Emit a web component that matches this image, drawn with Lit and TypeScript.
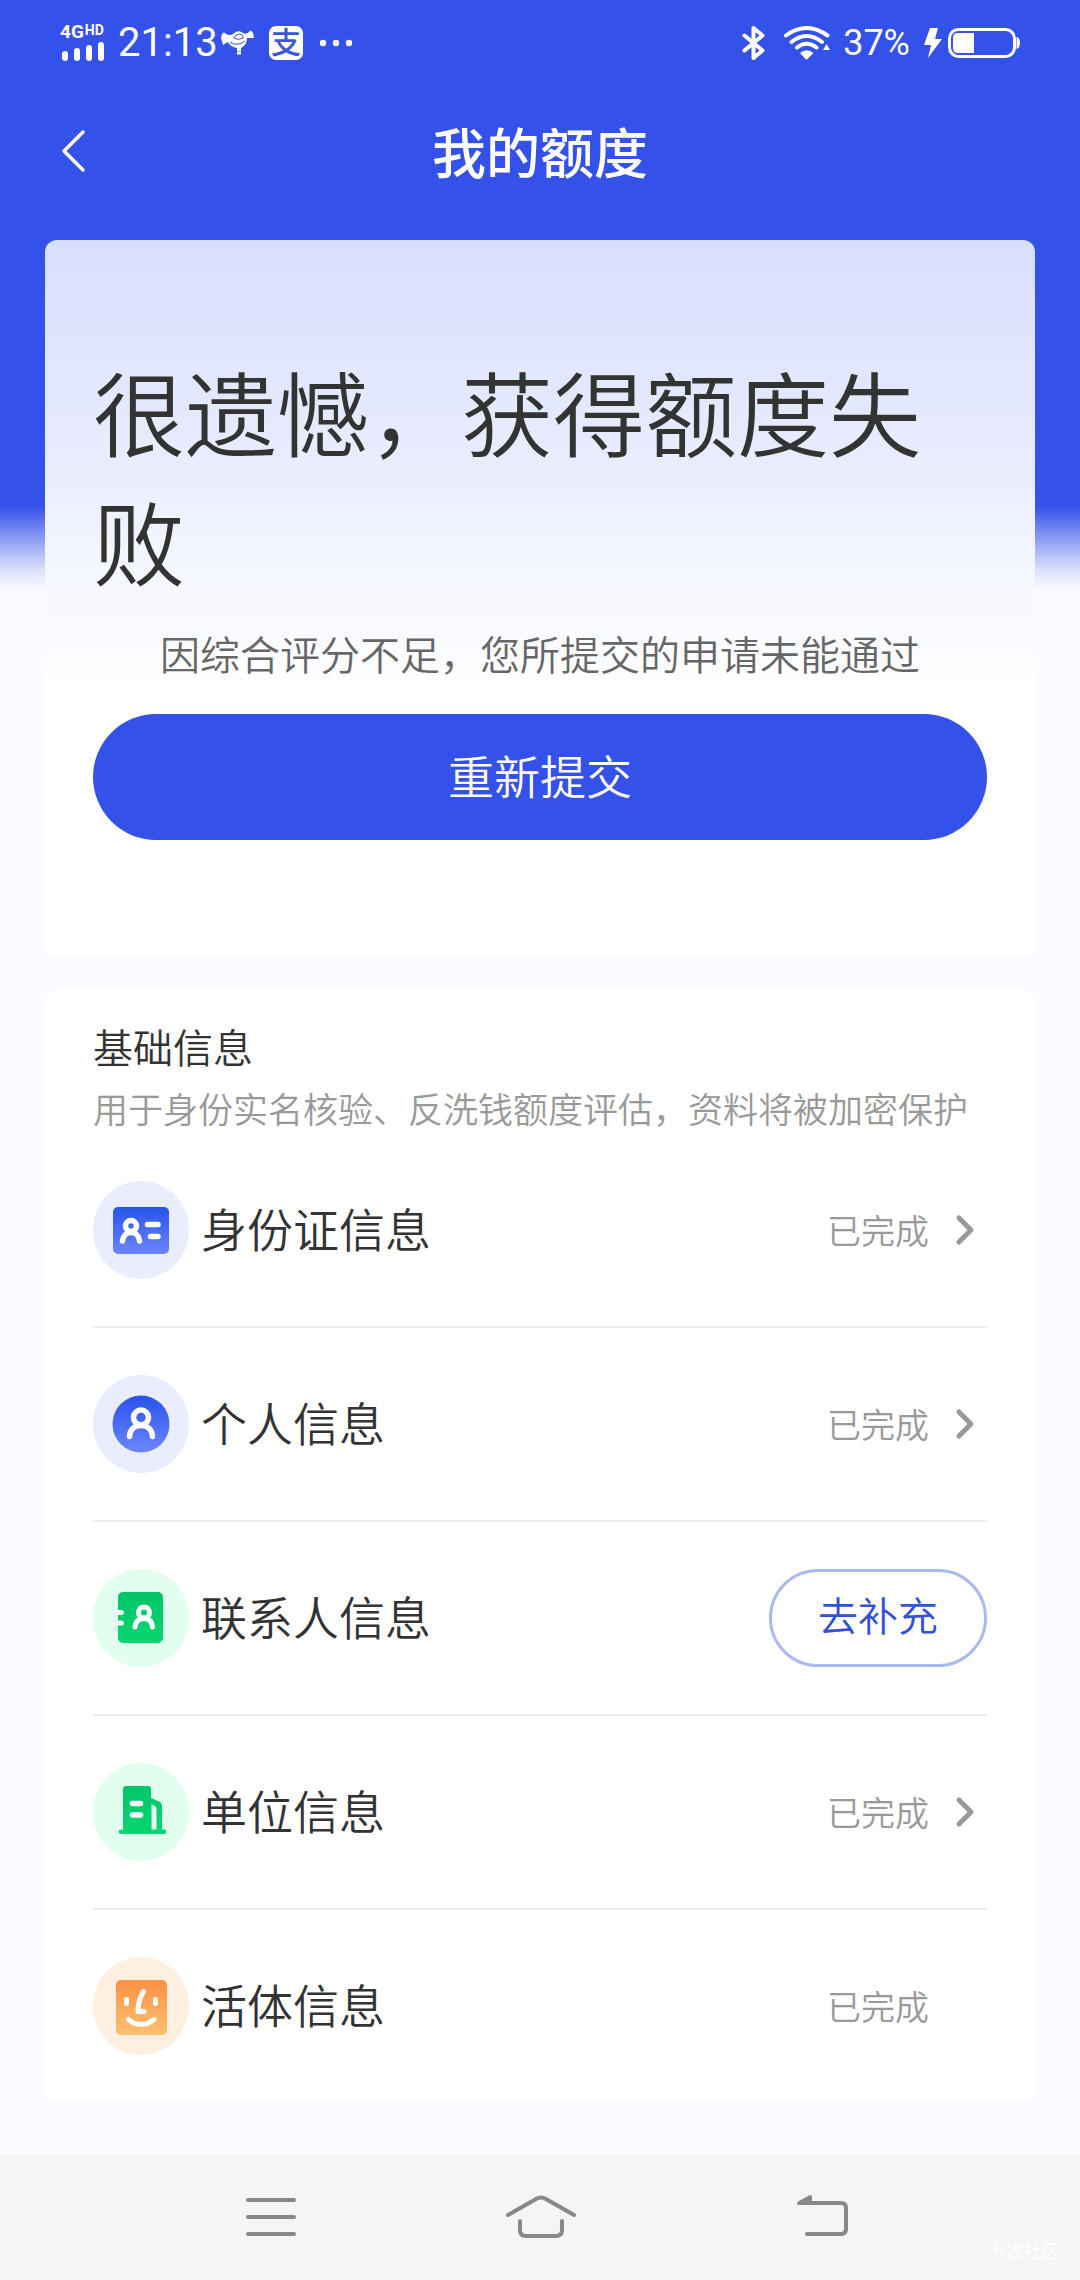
import { LitElement, html, svg, css, nothing } from "lit";
import { customElement, property } from "lit/decorators.js";

type IconName = "idcard" | "person" | "contacts" | "company" | "face";

interface InfoItem {
  icon: IconName;
  label: string;
  status: "done" | "todo";
  link: boolean;
}

const ITEMS: InfoItem[] = [
  { icon: "idcard", label: "身份证信息", status: "done", link: true },
  { icon: "person", label: "个人信息", status: "done", link: true },
  { icon: "contacts", label: "联系人信息", status: "todo", link: false },
  { icon: "company", label: "单位信息", status: "done", link: true },
  { icon: "face", label: "活体信息", status: "done", link: false },
];

const ICONS = {
  idcard: svg`
    <ellipse cx="48" cy="49" rx="48" ry="49" fill="#eaedfe"/>
    <rect x="20" y="26" width="56" height="47" rx="5" fill="url(#blue)"/>
    <g fill="none" stroke="#fff" stroke-width="5.5" stroke-linecap="round">
      <circle cx="38" cy="45" r="5.5"/>
      <path d="M29.5 60C30 54.5 33.5 51.5 38 51.5S46 54.5 46.5 60"/>
      <path d="M54.5 43.5H65M57.5 55.5H65"/>
    </g>`,
  person: svg`
    <ellipse cx="48" cy="49" rx="48" ry="49" fill="#eaedfe"/>
    <circle cx="48" cy="49" r="28.5" fill="url(#blue)"/>
    <g fill="none" stroke="#fff" stroke-width="5.5" stroke-linecap="round">
      <circle cx="48" cy="42.5" r="7.5"/>
      <path d="M36.5 61.5C37 54.5 41.5 50.5 48 50.5S59 54.5 59.5 61.5"/>
    </g>`,
  contacts: svg`
    <ellipse cx="48" cy="49" rx="48" ry="49" fill="#e2feef"/>
    <rect x="25" y="23" width="45" height="51" rx="5" fill="url(#green)"/>
    <g fill="none" stroke="#effff6" stroke-width="5" stroke-linecap="round">
      <path d="M24 43.5H28.5M24 54H28.5"/>
      <circle cx="51" cy="43.5" r="5.5" stroke="#fff"/>
      <path stroke="#fff" d="M42 58C42.5 52.5 46 49.5 51 49.5S59 52.5 59.5 58"/>
    </g>`,
  company: svg`
    <ellipse cx="48" cy="49" rx="48" ry="49" fill="#e2feef"/>
    <path fill="url(#green)" d="M30 67V26Q30 23 33 23H55Q58 23 58 26V35L66 38.5Q69 40 69 43V66.5H71A2.25 2.25 0 0 1 71 71H28A2.25 2.25 0 0 1 28 66.5Z"/>
    <path fill="#e2feef" d="M58.5 41L62 43Q63.5 44 63.5 46V66.5H58.5Z"/>
    <path fill="none" stroke="#fff" stroke-width="5.5" stroke-linecap="round" d="M39.5 40.5H47.5M39.5 52H47.5"/>`,
  face: svg`
    <ellipse cx="48" cy="49" rx="48" ry="49" fill="#feefe0"/>
    <rect x="23" y="23" width="51" height="55" rx="5" fill="url(#orange)"/>
    <g fill="none" stroke="#fff" stroke-width="5" stroke-linecap="round" stroke-linejoin="round">
      <path d="M33.5 42.5V46.5M62.5 42.5V46.5"/>
      <path d="M50.5 34.5C47 40 45 47 45 54.5H51"/>
      <path d="M35.5 62.5C42.5 69 54 69 61 62.5"/>
    </g>`,
};

@customElement("info-icon")
class InfoIcon extends LitElement {
  @property() name: IconName = "idcard";

  static styles = css`
    :host { display: block; flex: none; }
    .icon { display: block; width: 96px; height: 98px; }
  `;

  render() {
    return html`
      <svg class="icon" viewBox="0 0 96 98" aria-hidden="true">
        <defs>
          <linearGradient id="blue" x1="0" y1="0" x2="0" y2="1">
            <stop offset="0" stop-color="#2853ea"/><stop offset="1" stop-color="#6c86ff"/>
          </linearGradient>
          <linearGradient id="green" x1="0" y1="0" x2="0" y2="1">
            <stop offset="0" stop-color="#02c569"/><stop offset="1" stop-color="#06d672"/>
          </linearGradient>
          <linearGradient id="orange" x1="0" y1="0" x2="0" y2="1">
            <stop offset="0" stop-color="#ff9144"/><stop offset="1" stop-color="#fdc070"/>
          </linearGradient>
        </defs>
        ${ICONS[this.name]}
      </svg>`;
  }
}

@customElement("status-bar")
class StatusBar extends LitElement {
  static styles = css`
    :host {
      display: flex;
      justify-content: space-between;
      align-items: center;
      height: 86px;
      padding: 0 60px;
      color: #fff;
      font-family: Roboto, "Noto Sans CJK SC", sans-serif;
      font-weight: 400;
    }
    .side { display: flex; align-items: center; }
    .signal { display: flex; flex-direction: column; gap: 1px; width: 48px; margin-right: 10px; }
    .network { display: flex; align-items: flex-start; gap: 1px; font-weight: 700; }
    .gen { font-size: 19px; line-height: 16px; }
    .hd { font-size: 14px; line-height: 12px; }
    .time { font-size: 40px; line-height: 48px; }
    .percent { font-size: 36px; line-height: 48px; }
    svg { display: block; flex: none; }
    .bird { margin-left: 3px; }
    .pay { margin-left: 14px; }
    .dots { margin-left: 16px; }
    .wifi { margin: 0 13px 0 18px; }
    .bolt { margin: 0 6px 0 14px; }
  `;

  render() {
    return html`
      <div class="side">
        <div class="signal">
          <div class="network"><span class="gen">4G</span><span class="hd">HD</span></div>
          <svg width="46" height="22" viewBox="0 0 46 22" stroke="#fff" stroke-width="6" stroke-linecap="round">
            <path d="M5 13V17M17 10V17M29 7V17M41 4V17"/>
          </svg>
        </div>
        <span class="time">21:13</span>
        <svg class="bird" width="34" height="28" viewBox="0 0 34 28">
          <path fill="#fff" d="M1 5Q3 2 5 5Q9 7 12 5Q17 0 22 4Q25 6 28 3Q30 0 32 4L33 9Q29 9 26 9Q26 16 20 19V22H16V19Q9 18 7 13L2 16L1 12L0 9Z"/>
          <path fill="none" stroke="#3451e9" stroke-width="1" d="M13 9Q14 5 19 5Q23 6 22 9Q17 12 13 9ZM9 13Q16 18 24 12"/>
          <path stroke="#fff" stroke-width="3" d="M16 24H20"/>
        </svg>
        <svg class="pay" width="34" height="34" viewBox="0 0 34 34">
          <rect width="34" height="34" rx="7" fill="#fff"/>
          <text x="17" y="27" text-anchor="middle" font-size="30" font-weight="500" fill="#3e58d4">支</text>
        </svg>
        <svg class="dots" width="34" height="8" viewBox="0 0 34 8" fill="#fff">
          <circle cx="4" cy="4" r="3.2"/><circle cx="17" cy="4" r="3.2"/><circle cx="30" cy="4" r="3.2"/>
        </svg>
      </div>
      <div class="side">
        <svg width="24" height="36" viewBox="0 0 24 36" fill="none" stroke="#fff" stroke-width="4" stroke-linecap="round" stroke-linejoin="round">
          <path d="M2.5 10.5L20.5 25.5L11.5 33V3L20.5 10.5L2.5 25.5"/>
        </svg>
        <svg class="wifi" width="46" height="34" viewBox="0 0 46 34" fill="none" stroke="#fff" stroke-width="4" stroke-linecap="round">
          <path d="M2 9.5Q22.5 -5.5 43.5 9.5M7.5 16Q22.5 4 38 16M13 21.5Q22.5 14 32.5 21.5"/>
          <path fill="#fff" stroke="none" d="M16 27Q22.5 21.5 29.5 27L23.5 33Q22.5 34 21.5 33ZM39 24L42.5 18L46 24Z"/>
        </svg>
        <span class="percent">37%</span>
        <svg class="bolt" width="18" height="30" viewBox="0 0 18 30"><path fill="#fff" d="M6 0H14L11 11H18L4 30L7 17H0Z"/></svg>
        <svg width="72" height="30" viewBox="0 0 72 30">
          <rect x="1.5" y="1.5" width="65" height="27" rx="9" fill="none" stroke="#fff" stroke-width="3"/>
          <path fill="#fff" d="M10 5H26V25H10Q5 25 5 20V10Q5 5 10 5ZM68.5 9Q72 10 72 15T68.5 21Z"/>
        </svg>
      </div>`;
  }
}

@customElement("app-root")
class AppRoot extends LitElement {
  static styles = css`
    :host {
      display: flex;
      flex-direction: column;
      min-height: 100vh;
      color: #333;
      background: #fafbff linear-gradient(#3451e9 506px, #8e9ff2 540px, #dce2fc 570px, #fafbff 592px) no-repeat;
      font-family: "Noto Sans CJK SC", sans-serif;
      font-weight: 350;
    }
    h1, h2, h3, p, ul { margin: 0; padding: 0; font-weight: inherit; }
    button { margin: 0; padding: 0; font: inherit; cursor: pointer; }
    svg { display: block; flex: none; }
    .titlebar {
      display: grid;
      grid-template-columns: 96px 1fr 96px;
      align-items: center;
      height: 130px;
    }
    .back {
      justify-self: end;
      border: 0;
      background: none;
    }
    .title {
      color: #fff;
      font-size: 54px;
      font-weight: 500;
      line-height: 72px;
      text-align: center;
    }
    .content {
      display: flex;
      flex-direction: column;
      gap: 32px;
      padding: 24px 45px 48px;
    }
    .card { padding: 0 48px; border-radius: 12px; background: #fff; }
    .result {
      padding-top: 105px;
      padding-bottom: 118px;
      background: linear-gradient(#d8dffe, #dee3fe 80px, #eaedfe 230px, #f5f7ff 330px, #fafbff 400px, #fff 450px);
    }
    .headline { font-size: 92px; line-height: 129px; }
    .reason {
      margin-top: 22px;
      color: #666;
      font-size: 40px;
      line-height: 56px;
      text-align: center;
    }
    .submit {
      display: block;
      width: 100%;
      height: 126px;
      margin-top: 33px;
      padding-bottom: 6px;
      border: 0;
      border-radius: 63px;
      background: #3451e9;
      color: #fff;
      font-size: 46px;
    }
    .info { padding-top: 28px; }
    .section { font-size: 40px; line-height: 56px; }
    .note { margin-top: 10px; padding-bottom: 2px; color: #999; font-size: 35px; line-height: 48px; }
    .list { list-style: none; }
    .item + .item { border-top: 2px solid #ececec; }
    .row {
      display: flex;
      align-items: center;
      gap: 12px;
      height: 192px;
      color: inherit;
      text-decoration: none;
    }
    .label { flex: 1; padding-bottom: 6px; font-size: 46px; line-height: 64px; }
    .status { color: #999; font-size: 34px; line-height: 48px; }
    .arrow { width: 46px; height: 36px; }
    .fill {
      height: 98px;
      padding: 0 46px 8px;
      border: 3px solid #aab8f3;
      border-radius: 49px;
      background: none;
      color: #3350d6;
      font-size: 40px;
    }
    .nav {
      position: relative;
      display: grid;
      grid-template-columns: repeat(3, 1fr);
      height: 126px;
      margin-top: auto;
      padding: 0 119px 0 133px;
      background: #f5f5f5;
    }
    .key {
      display: flex;
      align-items: center;
      justify-content: center;
      border: 0;
      background: none;
    }
    .mark {
      position: absolute;
      right: 20px;
      bottom: 18px;
      color: #fff;
      font-size: 18px;
      line-height: 24px;
    }
  `;

  private renderRow(item: InfoItem) {
    const body = html`
      <info-icon name=${item.icon}></info-icon>
      <span class="label">${item.label}</span>
      ${item.status === "done"
        ? html`<span class="status">已完成</span>
            <svg class="arrow" viewBox="0 0 46 36" fill="none" stroke="#999" stroke-width="5" stroke-linecap="round" stroke-linejoin="round">
              ${item.link ? svg`<path d="M18 6L30 18L18 30"/>` : nothing}
            </svg>`
        : html`<button class="fill" type="button">去补充</button>`}`;
    return html`<li class="item">
      ${item.link
        ? html`<a class="row" href=${"#" + item.icon}>${body}</a>`
        : html`<div class="row">${body}</div>`}
    </li>`;
  }

  render() {
    return html`
      <status-bar></status-bar>
      <header class="titlebar">
        <button class="back" type="button" aria-label="返回">
          <svg width="36" height="48" viewBox="0 0 36 48" fill="none" stroke="#fff" stroke-width="3.5" stroke-linecap="round" stroke-linejoin="round">
            <path d="M23 5L4 24L23 43"/>
          </svg>
        </button>
        <h1 class="title">我的额度</h1>
      </header>
      <main class="content">
        <section class="card result">
          <h2 class="headline">很遗憾，获得额度失败</h2>
          <p class="reason">因综合评分不足，您所提交的申请未能通过</p>
          <button class="submit" type="button">重新提交</button>
        </section>
        <section class="card info">
          <h3 class="section">基础信息</h3>
          <p class="note">用于身份实名核验、反洗钱额度评估，资料将被加密保护</p>
          <ul class="list">${ITEMS.map((item) => this.renderRow(item))}</ul>
        </section>
      </main>
      <nav class="nav">
        <button class="key" type="button" aria-label="菜单">
          <svg width="50" height="44" viewBox="0 0 50 44" stroke="#888" stroke-width="4" stroke-linecap="round">
            <path d="M2 5H48M2 22H48M2 39H48"/>
          </svg>
        </button>
        <button class="key" type="button" aria-label="主页">
          <svg width="82" height="44" viewBox="0 0 82 44" fill="none" stroke="#888" stroke-width="4" stroke-linecap="round" stroke-linejoin="round">
            <path d="M2 20L30 4Q35 1 40 4L68 20M14 26V35Q14 41 20 41H50Q56 41 56 35V26"/>
          </svg>
        </button>
        <button class="key" type="button" aria-label="返回上一页">
          <svg width="52" height="44" viewBox="0 0 52 44" fill="none" stroke="#888" stroke-width="4" stroke-linecap="round">
            <path d="M8 8H44Q49 8 49 13V34Q49 39 44 39H10"/>
            <path fill="#888" stroke="none" d="M0 9Q0 7 1 6.5L13 0Q15 0 15 2V10H2Q0 10 0 9Z"/>
          </svg>
        </button>
        <span class="mark">卡农社区</span>
      </nav>`;
  }
}
